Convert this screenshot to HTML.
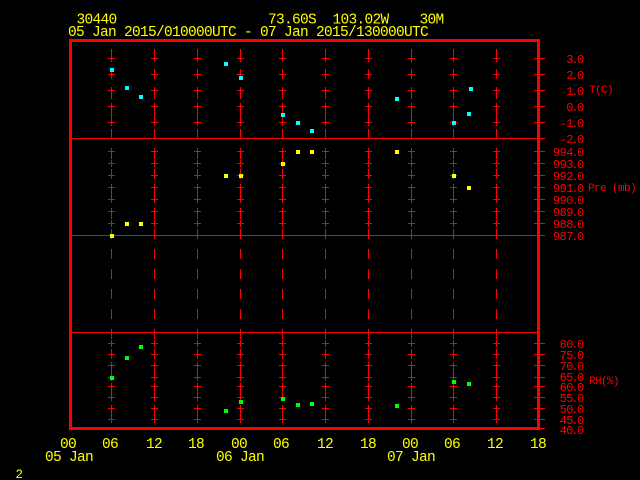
<!DOCTYPE html>
<html>
<head>
<meta charset="utf-8">
<style>
html,body{margin:0;padding:0;background:#000;width:640px;height:480px;overflow:hidden}
svg{display:block}
text{font-family:"Liberation Mono",monospace;white-space:pre}
.y{fill:#ff0;font-size:14.5px;letter-spacing:-.7px}
.r{fill:#f00;font-size:12px}
.s{fill:#f00;font-size:11px;letter-spacing:-.6px}
</style>
</head>
<body>
<svg width="640" height="480" viewBox="0 0 640 480" xmlns="http://www.w3.org/2000/svg">
<defs>
<g id="c" fill="none" stroke="#f00" stroke-width="1" shape-rendering="crispEdges">
<line x1=".5" x2=".5" y1="49" y2="419" stroke-dasharray="10 10"/>
<path d="M-3 58.5H4M.5 55V62M-3 74.5H4M.5 71V78M-3 90.5H4M.5 87V94M-3 106.5H4M.5 103V110M-3 122.5H4M.5 119V126
M-3 151.5H4M.5 148V155M-3 163.5H4M.5 160V167M-3 175.5H4M.5 172V179M-3 187.5H4M.5 184V191M-3 199.5H4M.5 196V203M-3 211.5H4M.5 208V215M-3 223.5H4M.5 220V227
M-3 343.5H4M.5 340V347M-3 354.5H4M.5 351V358M-3 365.5H4M.5 362V369M-3 377.5H4M.5 374V381M-3 386.5H4M.5 383V390M-3 397.5H4M.5 394V401M-3 408.5H4M.5 405V412M-3 419.5H4M.5 416V423"/>
</g>
</defs>
<rect width="640" height="480" fill="#000"/>
<use href="#c" x="111"/><use href="#c" x="154"/><use href="#c" x="197"/><use href="#c" x="240"/><use href="#c" x="282"/>
<use href="#c" x="325"/><use href="#c" x="368"/><use href="#c" x="411"/><use href="#c" x="453"/><use href="#c" x="496"/>
<g fill="none" stroke="#f00" shape-rendering="crispEdges">
<path stroke-width="1" d="M71 138.5H537M71 235.5H537M71 332.5H537"/>
<rect x="70.5" y="40.5" width="468" height="388" stroke-width="3"/>
<path stroke-width="1" d="M534 58.5H545M534 74.5H545M534 90.5H545M534 106.5H545M534 122.5H545M534 138.5H545M534 151.5H545M534 163.5H545M534 175.5H545M534 187.5H545M534 199.5H545M534 211.5H545M534 223.5H545M534 235.5H545M534 343.5H545M534 354.5H545M534 365.5H545M534 377.5H545M534 386.5H545M534 397.5H545M534 408.5H545M534 419.5H545M534 428.5H545"/>
</g>
<g fill="#0ff" shape-rendering="crispEdges">
<rect x="110" y="68" width="4" height="4"/><rect x="125" y="86" width="4" height="4"/><rect x="139" y="95" width="4" height="4"/><rect x="224" y="62" width="4" height="4"/><rect x="239" y="76" width="4" height="4"/><rect x="281" y="113" width="4" height="4"/><rect x="296" y="121" width="4" height="4"/><rect x="310" y="129" width="4" height="4"/><rect x="395" y="97" width="4" height="4"/><rect x="469" y="87" width="4" height="4"/><rect x="467" y="112" width="4" height="4"/><rect x="452" y="121" width="4" height="4"/>
</g>
<g fill="#ff0" shape-rendering="crispEdges">
<rect x="296" y="150" width="4" height="4"/><rect x="310" y="150" width="4" height="4"/><rect x="281" y="162" width="4" height="4"/><rect x="224" y="174" width="4" height="4"/><rect x="239" y="174" width="4" height="4"/><rect x="125" y="222" width="4" height="4"/><rect x="139" y="222" width="4" height="4"/><rect x="110" y="234" width="4" height="4"/><rect x="395" y="150" width="4" height="4"/><rect x="452" y="174" width="4" height="4"/><rect x="467" y="186" width="4" height="4"/>
</g>
<g fill="#0f0" shape-rendering="crispEdges">
<rect x="139" y="345" width="4" height="4"/><rect x="125" y="356" width="4" height="4"/><rect x="110" y="376" width="4" height="4"/><rect x="224" y="409" width="4" height="4"/><rect x="239" y="400" width="4" height="4"/><rect x="281" y="397" width="4" height="4"/><rect x="296" y="403" width="4" height="4"/><rect x="310" y="402" width="4" height="4"/><rect x="395" y="404" width="4" height="4"/><rect x="452" y="380" width="4" height="4"/><rect x="467" y="382" width="4" height="4"/>
</g>
<g>
<text class="y" x="76.5" y="23.5">30440</text>
<text class="y" x="268" y="23.5">73.60S</text>
<text class="y" x="332.5" y="23.5">103.02W</text>
<text class="y" x="419.5" y="23.5">30M</text>
<text class="y" x="68" y="36">05 Jan 2015/010000UTC - 07 Jan 2015/130000UTC</text>
<g text-anchor="middle">
<text class="y" x="68" y="448">00</text><text class="y" x="110" y="448">06</text><text class="y" x="154" y="448">12</text><text class="y" x="196" y="448">18</text><text class="y" x="239" y="448">00</text><text class="y" x="281" y="448">06</text><text class="y" x="325" y="448">12</text><text class="y" x="368" y="448">18</text><text class="y" x="410" y="448">00</text><text class="y" x="452" y="448">06</text><text class="y" x="495" y="448">12</text><text class="y" x="538" y="448">18</text>
</g>
<text class="y" x="45" y="461">05 Jan</text>
<text class="y" x="216" y="461">06 Jan</text>
<text class="y" x="387" y="461">07 Jan</text>
<text class="y" x="15.5" y="478" style="font-size:12.5px">2</text>
</g>
<g>
<text class="r" x="566.2 571.2 577" y="63">3.0</text>
<text class="r" x="566.2 571.2 577" y="79">2.0</text>
<text class="r" x="566.2 571.2 577" y="95">1.0</text>
<text class="r" x="566.2 571.2 577" y="111">0.0</text>
<text class="r" x="559.6 566.2 571.2 577" y="127">-1.0</text>
<text class="r" x="559.6 566.2 571.2 577" y="143">-2.0</text>
<text class="r" x="553 559.6 566.2 571.2 577" y="156">994.0</text>
<text class="r" x="553 559.6 566.2 571.2 577" y="168">993.0</text>
<text class="r" x="553 559.6 566.2 571.2 577" y="180">992.0</text>
<text class="r" x="553 559.6 566.2 571.2 577" y="192">991.0</text>
<text class="r" x="553 559.6 566.2 571.2 577" y="204">990.0</text>
<text class="r" x="553 559.6 566.2 571.2 577" y="216">989.0</text>
<text class="r" x="553 559.6 566.2 571.2 577" y="228">988.0</text>
<text class="r" x="553 559.6 566.2 571.2 577" y="240">987.0</text>
<text class="r" x="559.6 566.2 571.2 577" y="348">80.0</text>
<text class="r" x="559.6 566.2 571.2 577" y="359">75.0</text>
<text class="r" x="559.6 566.2 571.2 577" y="370">70.0</text>
<text class="r" x="559.6 566.2 571.2 577" y="381">65.0</text>
<text class="r" x="559.6 566.2 571.2 577" y="391">60.0</text>
<text class="r" x="559.6 566.2 571.2 577" y="402">55.0</text>
<text class="r" x="559.6 566.2 571.2 577" y="413">50.0</text>
<text class="r" x="559.6 566.2 571.2 577" y="424">45.0</text>
<text class="r" x="559.6 566.2 571.2 577" y="434">40.0</text>
<text class="s" x="589" y="93">T(C)</text>
<text class="s" x="588" y="191">Pre (mb)</text>
<text class="s" x="589" y="384">RH(%)</text>
</g>
</svg>
</body>
</html>
